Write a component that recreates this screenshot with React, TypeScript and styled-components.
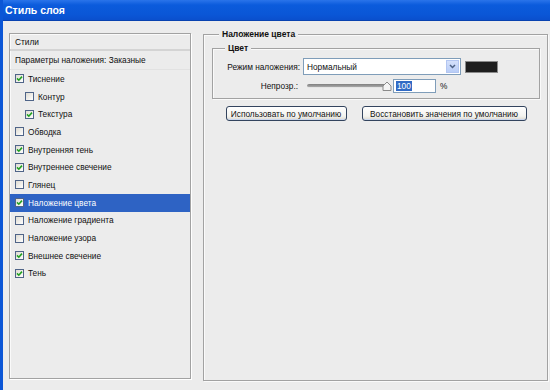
import React from 'react';
import styled, { createGlobalStyle } from 'styled-components';

const Global = createGlobalStyle`
  html, body { margin: 0; padding: 0; background: #ececec; overflow: hidden; }
  #root { width: 550px; height: 390px; }
`;

const Window = styled.div`
  width: 550px;
  height: 390px;
  box-sizing: border-box;
  border-left: 3px solid #0b56d6;
  display: flex;
  flex-direction: column;
  background: #ececec;
  font-family: "Liberation Sans", Arial, sans-serif;
  font-size: 8.3px;
  color: #111;
`;

const TitleBar = styled.div`
  height: 21px;
  box-sizing: border-box;
  padding-left: 2px;
  line-height: 20px;
  color: #fff;
  font-weight: bold;
  font-size: 10.5px;
  background: linear-gradient(#2a74ea 0%, #0b5bdc 25%, #0a56d6 75%, #0a4fcd 100%);
  border-bottom: 1px solid #0842b0;
`;

const Body = styled.div`
  flex: 1;
  display: flex;
  gap: 12px;
  padding: 12px 2px 11px 6px;
  min-height: 0;
`;

const StylesList = styled.div`
  width: 182px;
  box-sizing: border-box;
  border: 1px solid #a2a2a2;
  box-shadow: 1px 1px 0 #fff, inset 1px 1px 0 #fafafa;
  display: flex;
  flex-direction: column;
`;

const HeaderRow = styled.div<{ $sep?: string; $h?: number }>`
  height: ${(p) => p.$h || 17}px;
  box-sizing: border-box;
  display: flex;
  align-items: center;
  padding-left: 5px;
  border-bottom: ${(p) => p.$sep || 'none'};
`;

const ItemRow = styled.div<{ $sub?: boolean; $sel?: boolean }>`
  height: 17.7px;
  display: flex;
  align-items: center;
  gap: 4px;
  padding-left: ${(p) => (p.$sub ? 15 : 5)}px;
  background: ${(p) => (p.$sel ? '#2e63c4' : 'transparent')};
  color: ${(p) => (p.$sel ? '#fff' : '#111')};
`;

const Box = styled.span`
  width: 9px;
  height: 9px;
  box-sizing: border-box;
  border: 1px solid #4f6488;
  background: linear-gradient(135deg, #dedbd2, #ffffff);
  display: flex;
  align-items: center;
  justify-content: center;
  flex: none;
`;

const Check = ({ on }: { on: boolean }) => (
  <Box>
    {on && (
      <svg width="7" height="7" viewBox="0 0 7 7">
        <path d="M1 3.4 L2.8 5.2 L6 1.6" fill="none" stroke="#21a121" strokeWidth="1.6" />
      </svg>
    )}
  </Box>
);

const Group = styled.fieldset<{ $outer?: boolean }>`
  margin: ${(p) => (p.$outer ? '-6px 0 -2px 0' : '0')};
  padding: ${(p) => (p.$outer ? '0 7px 0 8px' : '3px 0 5px 0')};
  min-width: 0;
  flex: ${(p) => (p.$outer ? 1 : 'none')};
  border: 1px solid #a2a2a2;
  box-shadow: inset 1px 1px 0 #fafafa, 1px 1px 0 #fafafa;
`;

const Legend = styled.legend<{ $off: number }>`
  margin-left: ${(p) => p.$off}px;
  padding: 0 3px;
  font-weight: bold;
  font-size: 8.5px;
  line-height: 14px;
  background: #ececec;
`;

const FormGrid = styled.div`
  display: grid;
  grid-template-columns: 87px auto;
  column-gap: 3px;
  row-gap: 4px;
  align-items: center;
`;

const Label = styled.div<{ $pr?: number }>`
  text-align: right;
  padding-right: ${(p) => p.$pr || 0}px;
`;

const Line = styled.div`
  display: flex;
  align-items: center;
`;

const Select = styled.div`
  width: 158px;
  height: 17px;
  box-sizing: border-box;
  border: 1px solid #7f9db9;
  background: #fff;
  display: flex;
  align-items: stretch;
`;

const SelectText = styled.div`
  flex: 1;
  padding-left: 3px;
  display: flex;
  align-items: center;
`;

const DropBtn = styled.div`
  width: 13px;
  margin: 1px;
  box-sizing: border-box;
  background: linear-gradient(#d4e0fb, #b9cdf7);
  border: 1px solid #b3c6f1;
  display: flex;
  align-items: center;
  justify-content: center;
`;

const Swatch = styled.div`
  width: 33px;
  height: 12px;
  box-sizing: border-box;
  margin-left: 4px;
  border: 1px solid #8a8a8a;
  background: #1e1e1e;
`;

const Slider = styled.div`
  position: relative;
  width: 90px;
  height: 14px;
  display: flex;
  align-items: center;
`;

const Track = styled.div`
  margin-left: 4px;
  width: 80px;
  height: 3px;
  border-radius: 2px;
  background: linear-gradient(#7e7e7e, #a9a9a9);
  border-bottom: 1px solid #e4e4e4;
`;

const Thumb = styled.svg`
  position: absolute;
  left: 79px;
  top: 2px;
`;

const NumInput = styled.div`
  width: 43px;
  height: 14px;
  box-sizing: border-box;
  border: 1px solid #7f9db9;
  background: #fff;
  display: flex;
  align-items: center;
  padding-left: 2px;
`;

const Sel = styled.span`
  background: #316ac5;
  color: #fff;
  line-height: 10px;
  padding: 0 1px;
`;

const Percent = styled.span`
  margin-left: 4px;
`;

const Buttons = styled.div`
  display: flex;
  justify-content: center;
  gap: 15px;
  margin-top: 7px;
`;

const Button = styled.button<{ $w: number }>`
  width: ${(p) => p.$w}px;
  height: 15px;
  padding: 0;
  box-sizing: border-box;
  white-space: nowrap;
  border: 1px solid #33445e;
  border-radius: 3px;
  background: linear-gradient(#ffffff, #f3f3ef 70%, #dcd8ce);
  box-shadow: inset 0 -1px 0 #c9d6ee;
  font-family: inherit;
  font-size: 8.3px;
  color: #111;
`;

const items: { t: string; on: boolean; sub?: boolean; sel?: boolean }[] = [
  { t: 'Тиснение', on: true },
  { t: 'Контур', on: false, sub: true },
  { t: 'Текстура', on: true, sub: true },
  { t: 'Обводка', on: false },
  { t: 'Внутренняя тень', on: true },
  { t: 'Внутреннее свечение', on: true },
  { t: 'Глянец', on: false },
  { t: 'Наложение цвета', on: true, sel: true },
  { t: 'Наложение градиента', on: false },
  { t: 'Наложение узора', on: false },
  { t: 'Внешнее свечение', on: true },
  { t: 'Тень', on: true },
];

export default function App() {
  return (
    <Window>
      <Global />
      <TitleBar>Стиль слоя</TitleBar>
      <Body>
        <StylesList>
          <HeaderRow $sep="2px solid #d4d4d4">Стили</HeaderRow>
          <HeaderRow $sep="1px solid #e2e2e2" $h={19}>
            Параметры наложения: Заказные
          </HeaderRow>
          {items.map((it) => (
            <ItemRow key={it.t} $sub={it.sub} $sel={it.sel}>
              <Check on={it.on} />
              {it.t}
            </ItemRow>
          ))}
        </StylesList>
        <Group $outer>
          <Legend $off={7}>Наложение цвета</Legend>
          <Group>
            <Legend $off={12}>Цвет</Legend>
            <FormGrid>
              <Label>Режим наложения:</Label>
              <Line>
                <Select>
                  <SelectText>Нормальный</SelectText>
                  <DropBtn>
                    <svg width="7" height="5" viewBox="0 0 7 5">
                      <path d="M1 1 L3.5 3.5 L6 1" fill="none" stroke="#4d6185" strokeWidth="1.5" />
                    </svg>
                  </DropBtn>
                </Select>
                <Swatch />
              </Line>
              <Label $pr={2}>Непрозр.:</Label>
              <Line>
                <Slider>
                  <Track />
                  <Thumb width="10" height="10" viewBox="0 0 10 10">
                    <path d="M1 9.5 L1 5 L5 1 L9 5 L9 9.5 Z" fill="#f4f4f4" stroke="#8a8a8a" strokeWidth="1" />
                  </Thumb>
                </Slider>
                <NumInput>
                  <Sel>100</Sel>
                </NumInput>
                <Percent>%</Percent>
              </Line>
            </FormGrid>
          </Group>
          <Buttons>
            <Button $w={121}>Использовать по умолчанию</Button>
            <Button $w={165}>Восстановить значения по умолчанию</Button>
          </Buttons>
        </Group>
      </Body>
    </Window>
  );
}
